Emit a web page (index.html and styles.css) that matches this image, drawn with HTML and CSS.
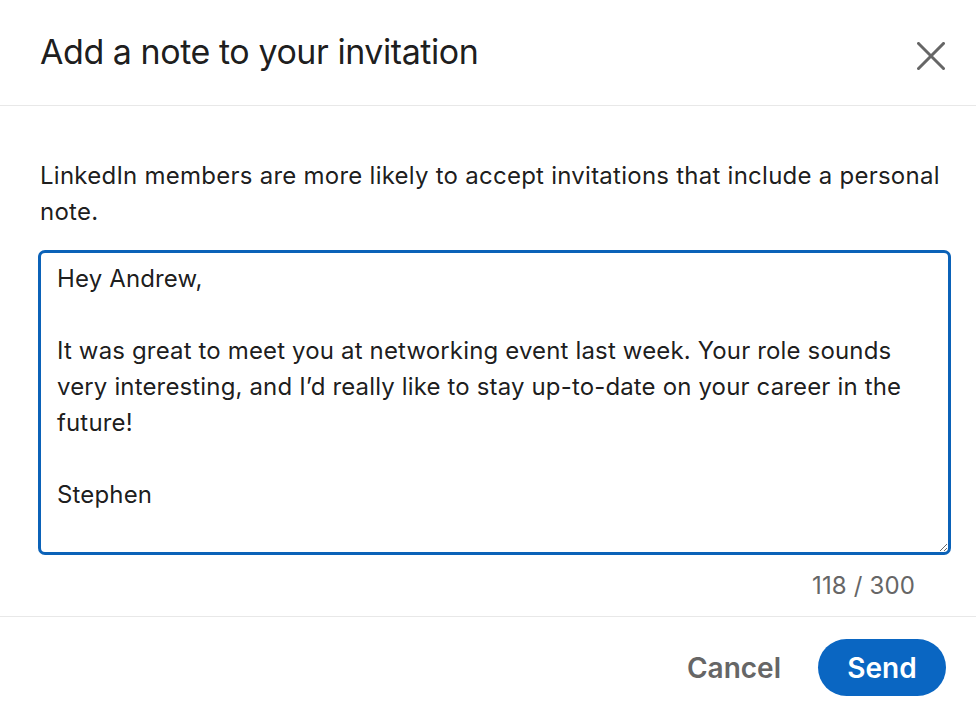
FILE: index.html
```html
<!DOCTYPE html>
<html>
<head>
<meta charset="utf-8">
<link rel="stylesheet" href="styles.css">
</head>
<body>
<div class="modal">
  <header class="modal-header">
    <h2 class="modal-title">Add a note to your invitation</h2>
    <button class="close-btn" aria-label="Dismiss">
      <svg width="28" height="28" viewBox="0 0 28 28"><path d="M1.5 1.5 L26.5 26.5 M26.5 1.5 L1.5 26.5" stroke="#666666" stroke-width="3" stroke-linecap="square" fill="none"/></svg>
    </button>
  </header>
  <div class="modal-body">
    <p class="intro">LinkedIn members are more likely to accept invitations that include a personal note.</p>
    <textarea class="note" readonly>Hey Andrew,

It was great to meet you at networking event last week. Your role sounds very interesting, and I’d really like to stay up-to-date on your career in the future!

Stephen</textarea>
    <div class="counter">118 / 300</div>
  </div>
  <footer class="modal-footer">
    <button class="btn-cancel">Cancel</button>
    <button class="btn-send">Send</button>
  </footer>
</div>
</body>
</html>
```
FILE: styles.css
```css
html, body {
  margin: 0;
  padding: 0;
  background: #ffffff;
}
body {
  font-family: Inter, "Noto Sans", sans-serif;
  color: rgba(0, 0, 0, 0.9);
}
.modal {
  width: 976px;
}
.modal-header {
  box-sizing: border-box;
  height: 106px;
  border-bottom: 1px solid #e8e8e8;
  display: flex;
  align-items: flex-start;
  justify-content: space-between;
  padding: 32px 31px 0 40px;
}
.modal-title {
  margin: 0;
  font-size: 34px;
  line-height: 40px;
  font-weight: 400;
  letter-spacing: -0.45px;
}
.close-btn {
  border: 0;
  background: transparent;
  padding: 0;
  width: 28px;
  height: 28px;
  display: flex;
  margin-top: 10px;
}
.modal-body {
  padding: 0 25px 0 38px;
}
.intro {
  margin: 0;
  padding-top: 52px;
  padding-left: 2px;
  font-size: 24px;
  line-height: 36px;
  letter-spacing: 0.25px;
}
.note {
  display: block;
  box-sizing: border-box;
  width: 913px;
  height: 305px;
  margin-top: 20px;
  border: 3px solid #0b62b8;
  border-radius: 7px;
  padding: 8px 16px;
  font-family: Inter, "Noto Sans", sans-serif;
  font-size: 24px;
  line-height: 36px;
  letter-spacing: 0.15px;
  color: rgba(0, 0, 0, 0.9);
  resize: vertical;
  outline: none;
  overflow: hidden;
}
.counter {
  text-align: right;
  padding-right: 36px;
  font-size: 24px;
  line-height: 36px;
  letter-spacing: 0.15px;
  color: #666666;
  margin-top: 13px;
  height: 48px;
}
.modal-footer {
  border-top: 1px solid #e8e8e8;
  display: flex;
  justify-content: flex-end;
  align-items: center;
  gap: 37px;
  padding: 22px 30px 0 0;
}
.btn-cancel {
  border: 0;
  background: transparent;
  font-family: Inter, "Noto Sans", sans-serif;
  font-size: 28px;
  font-weight: 600;
  color: #666666;
  padding: 0;
}
.btn-send {
  border: 0;
  background: #0a66c2;
  color: #ffffff;
  font-family: Inter, "Noto Sans", sans-serif;
  font-size: 28px;
  font-weight: 600;
  height: 57px;
  width: 128px;
  border-radius: 29px;
  padding: 0;
}
```
